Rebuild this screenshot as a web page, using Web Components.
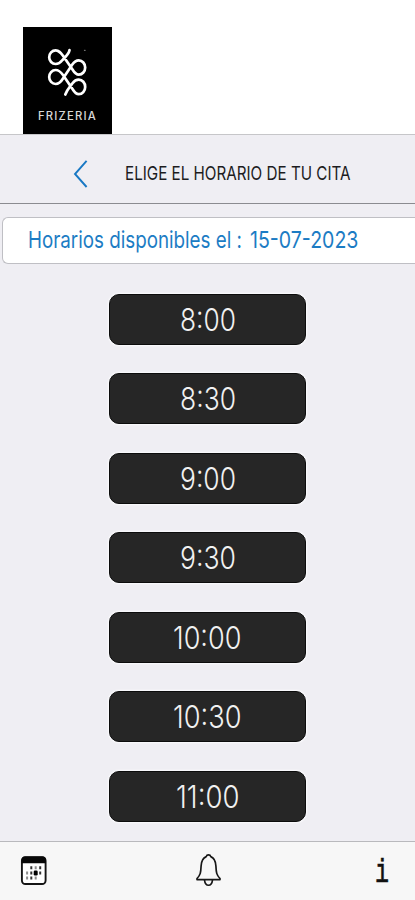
<!DOCTYPE html>
<html lang="es">
<head>
<meta charset="utf-8">
<title>Frizeria</title>
<style>
html,body{margin:0;height:100%;overflow:hidden;background:#efeef3}
</style>
</head>
<body>
<booking-app></booking-app>
<script>
// One line of text condensed or widened to an exact advance width.
class FitText extends HTMLElement{
  connectedCallback(){
    const g=n=>this.getAttribute(n);
    const w=+g('width'),s=+g('size'),base=+g('base')||s,h=+g('height')||Math.ceil(s*1.25);
    this.attachShadow({mode:'open'}).innerHTML=`<style>
      :host{display:block;flex:none;width:${w}px;height:${h}px}
      svg{display:block;overflow:visible}
      text{font-family:${g('font')||'Inter'},"Liberation Sans",sans-serif;font-size:${s}px;font-weight:${g('weight')||400};letter-spacing:${g('track')||0}px;fill:currentColor;stroke:currentColor;stroke-width:${g('stroke')||0};white-space:pre}
    </style><svg width="${w}" height="${h}"><text x="0" y="${base}"></text></svg>`;
    const t=this.shadowRoot.querySelector('text');
    t.textContent=g('text');
    const natural=t.getComputedTextLength();
    if(natural)t.setAttribute('transform',`scale(${w/natural} 1)`);
  }
}
customElements.define('fit-text',FitText);

class BrandHeader extends HTMLElement{
  constructor(){super();this.attachShadow({mode:'open'}).innerHTML=`<style>
    :host{display:flex;box-sizing:border-box;height:134px;padding:27px 0 0 23px;background:#fff;border-bottom:0}
    .logo{width:89px;height:107px;background:#000;color:#d8d8d8;display:flex;flex-direction:column;align-items:center}
    svg{display:block;flex:none}
    fit-text{margin-top:1px}
  </style><div class="logo">
    <svg width="89" height="80" viewBox="0 0 89 80" fill="none" stroke="#fff" stroke-width="2.700" stroke-linecap="round" stroke-linejoin="round">
      <path d="M46.500 23.200C46 26.500 43 29.500 39.500 33C37.500 35.500 35.500 37 32.600 37A6.400 6.800 0 0 1 32.600 23.400C36 23.400 37.500 25.500 40 28.800L49.500 42.500C51.500 45.800 53 47.600 55.800 47.600A6.400 7.100 0 0 0 55.800 33.400C53 33.400 51 35 49.300 37.500L40 51.500C38 54.800 36 57 32.600 57A6.400 7 0 0 1 32.600 43C36 43 38 45.200 40 48L49.500 62C51.500 65.300 53 67.200 55.800 67.200A6.400 7.300 0 0 0 55.800 52.600C53 52.600 51 54.200 49.300 56.500C46.500 60.500 44 62.500 42.300 67.500"/>
      <path d="M61.500 23.300h.6" stroke="#777" stroke-width="1.300"/>
    </svg>
    <fit-text text="FRIZERIA" size="11.500" weight="500" track="1.200" width="59" height="16" base="12"></fit-text>
  </div>`}
}
customElements.define('brand-header',BrandHeader);

class PageTitle extends HTMLElement{
  constructor(){super();this.attachShadow({mode:'open'}).innerHTML=`<style>
    :host{display:flex;box-sizing:border-box;height:70px;padding-left:73px;border-top:1px solid #c6c6c9;border-bottom:1px solid #8b8b90;background:#efeef3;align-items:flex-start;color:#1c1c1e}
    svg{display:block;margin-top:24px;flex:none}
    fit-text{margin:26px 0 0 36px}
  </style>
  <svg width="16" height="30" fill="none" stroke="#1878c4" stroke-width="1.900"><path d="M13.600 1.800L2 15L13.600 28"/></svg>
  <fit-text text="ELIGE EL HORARIO DE TU CITA" size="19.300" width="225.500" base="19"></fit-text>`}
}
customElements.define('page-title',PageTitle);

class DateField extends HTMLElement{
  constructor(){super();this.attachShadow({mode:'open'}).innerHTML=`<style>
    :host{display:flex;box-sizing:border-box;height:47px;margin:13px 0 0 2px;padding:8px 0 0 25px;border:1.500px solid #bfbfc4;border-right:0;border-radius:6px 0 0 6px;background:#fff;color:#1c7cc4;gap:8px}
  </style><fit-text text="Horarios disponibles el :" size="23.500" width="214" base="21.800"></fit-text><fit-text text="15-07-2023" size="23.500" width="108.500" base="21.800"></fit-text>`}
}
customElements.define('date-field',DateField);

class TimeSlot extends HTMLElement{
  connectedCallback(){
    const t=this.getAttribute('time'),w=this.getAttribute('w');
    this.attachShadow({mode:'open'}).innerHTML=`<style>
    :host{display:flex;box-sizing:border-box;justify-content:center;width:197px;height:51px;border-radius:10px;background:#262626;border:1px solid #0c0c0c;box-shadow:0 0 1.500px 1px #fbfbfd;color:#f1f1f1}
  </style><fit-text text="${t}" size="31.500" weight="340" width="${w}" base="36"></fit-text>`}
}
customElements.define('time-slot',TimeSlot);

class SlotList extends HTMLElement{
  constructor(){super();this.attachShadow({mode:'open'}).innerHTML=`<style>
    :host{display:flex;flex-direction:column;align-items:center;gap:28.500px;padding-top:29.600px;flex:1;min-height:0}
  </style><slot></slot>`}
}
customElements.define('slot-list',SlotList);

class TabBar extends HTMLElement{
  constructor(){super();this.attachShadow({mode:'open'}).innerHTML=`<style>
    :host{display:flex;box-sizing:border-box;flex:none;height:59px;border-top:1px solid #b9b9bd;background:#f7f7f7;padding:11px 26px 0 20px;justify-content:space-between;align-items:flex-start;color:#111}
    svg{display:block}
  </style>
  <svg width="28" height="34" fill="none">
    <rect x="1.900" y="4.200" width="23.700" height="26.800" rx="3.500" fill="#fff" stroke="#151515" stroke-width="1.900"/>
    <path d="M1.500 10.300V7Q1.500 3.500 5 3.500H22.500Q26 3.500 26 7V10.300Z" fill="#080808"/>
    <g fill="#333"><path d="M10.300 13.300h2v3h-2zM19.200 13.300h2v3h-2zM10.300 18.500h2v3h-2zM19.200 18.500h2v3h-2zM10.300 23.500h2v3h-2z"/></g>
    <g fill="#8d8d8d"><path d="M14.700 13.300h2v3h-2zM6.100 18.500h2v3h-2zM6.100 23.500h2v3h-2zM14.700 23.500h2v3h-2z"/></g>
    <rect x="13.700" y="17.500" width="4" height="5" rx="1.300" fill="#000"/>
  </svg>
  <svg width="28" height="36" fill="none" stroke="#171717" stroke-width="1.700" stroke-linejoin="round" style="margin-left:-8px">
    <path d="M14.500 1.800C16 1.800 16.500 2.500 16.800 3.600C20.500 5.200 21.700 8.500 21.900 13C22.200 19.500 22.500 22 26 25.500V26.600H3V25.500C6.500 22 6.800 19.500 7.100 13C7.300 8.500 8.500 5.200 12.200 3.600C12.500 2.500 13 1.800 14.500 1.800Z"/>
    <path d="M10.500 27C11.300 34 17.700 34 18.500 27"/>
  </svg>
  <fit-text text="i" font="Liberation Mono" weight="400" stroke=".7" size="33" width="14" height="34" base="29.500"></fit-text>`}
}
customElements.define('tab-bar',TabBar);

class BookingApp extends HTMLElement{
  constructor(){super();this.attachShadow({mode:'open'}).innerHTML=`<style>
    :host{display:flex;flex-direction:column;width:415px;height:900px;overflow:hidden;background:#efeef3}
    brand-header,page-title,date-field{flex:none}
  </style>
  <brand-header></brand-header>
  <page-title></page-title>
  <date-field></date-field>
  <slot-list>
    <time-slot time="8:00" w="56"></time-slot>
    <time-slot time="8:30" w="56"></time-slot>
    <time-slot time="9:00" w="56"></time-slot>
    <time-slot time="9:30" w="56"></time-slot>
    <time-slot time="10:00" w="68.500"></time-slot>
    <time-slot time="10:30" w="68.500"></time-slot>
    <time-slot time="11:00" w="63.500"></time-slot>
  </slot-list>
  <tab-bar></tab-bar>`}
}
customElements.define('booking-app',BookingApp);
</script>
</body>
</html>
